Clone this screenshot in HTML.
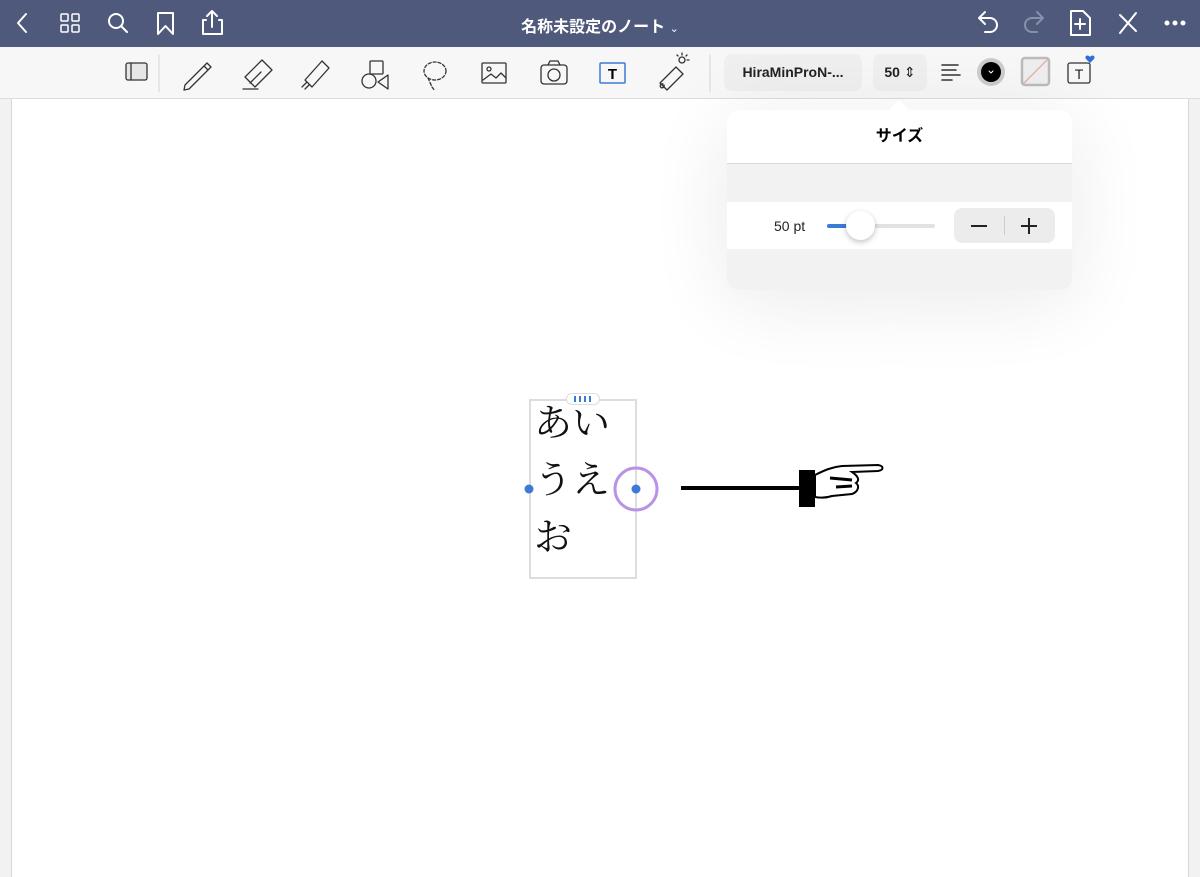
<!DOCTYPE html>
<html><head><meta charset="utf-8"><style>
*{margin:0;padding:0;box-sizing:border-box}
body{width:1200px;height:877px;overflow:hidden;background:#f2f2f2;font-family:"Liberation Sans","Noto Sans CJK JP",sans-serif;position:relative}
.top{position:absolute;left:0;top:0;width:1200px;height:47px;background:#4f597b}
.tb{position:absolute;left:0;top:47px;width:1200px;height:52px;background:#f7f7f7;border-bottom:1px solid #ddd}
.page{position:absolute;left:11px;top:99px;width:1178px;height:778px;background:#fff;border-left:1px solid #d8d8d8;border-right:1px solid #d8d8d8}
svg{position:absolute;overflow:visible}
.title{position:absolute;left:0;width:1200px;top:13px;text-align:center;color:#fff;font-size:16px;font-weight:bold}
.pill{position:absolute;background:#efefef;border-radius:8px;font-size:14px;font-weight:bold;color:#222;text-align:center}
.pop{position:absolute;left:727px;top:110px;width:345px;height:180px;background:#f2f2f2;border-radius:12px;box-shadow:0 10px 80px rgba(0,0,0,0.09);overflow:visible}
</style></head><body>
<div class="top"></div>
<div class="title">名称未設定のノート <span style="font-size:11px;font-weight:normal">&#8964;</span></div>
<svg width="1200" height="47" style="left:0;top:0" fill="none" stroke="#fff" stroke-width="2" stroke-linecap="round" stroke-linejoin="round">
<path d="M26 14 L18 23 L26 32"/>
<rect x="61" y="14" width="7" height="7" rx="1" stroke-width="1.5"/><rect x="72" y="14" width="7" height="7" rx="1" stroke-width="1.5"/><rect x="61" y="25" width="7" height="7" rx="1" stroke-width="1.5"/><rect x="72" y="25" width="7" height="7" rx="1" stroke-width="1.5"/>
<circle cx="116" cy="21" r="7"/><path d="M121 26 L127 32"/>
<path d="M158 13 H173 V34 L165.5 26 L158 34 Z"/>
<path d="M206 20 H203 V34 H222 V20 H219 M212 27 V11 M207 16 L212 11 L217 16"/>
<path d="M979 18 L985 12 M979 18 L985 24 M979 18 H990 A7 7 0 0 1 990 32 H985"/>
<path stroke="#8890a8" d="M1043 18 L1037 12 M1043 18 L1037 24 M1043 18 H1032 A7 7 0 0 0 1032 32 H1037"/>
<path d="M1071 11 H1083 L1090 18 V35 H1071 Z M1080 19 V29 M1075 24 H1085"/>
<path d="M1120 15 L1136 31 M1136 13 L1120 33"/>
<circle cx="1167" cy="23" r="1.5" fill="#fff"/><circle cx="1175" cy="23" r="1.5" fill="#fff"/><circle cx="1183" cy="23" r="1.5" fill="#fff"/>
</svg>
<div class="tb"></div>
<svg width="1200" height="52" style="left:0;top:47px" fill="none" stroke="#333" stroke-width="1.3" stroke-linecap="round" stroke-linejoin="round">
<rect x="126" y="16" width="21" height="17" rx="2" fill="#e6e6e6"/><path d="M131 16 V33"/>
<path d="M159 8 V45" stroke="#ddd"/>
<path d="M185 38 L207 16 L211 20 L189 42 L184 43 Z M204 19 L208 23"/>
<path d="M245 30 L262 13 L272 23 L255 40 Z M250 36 L261 25 M243 42 H258"/>
<path d="M305 33 L322 14 L329 21 L312 40 Z M302 40 L307 35 M309 38 L305 42"/>
<rect x="370" y="14" width="13" height="13" rx="1"/><circle cx="369" cy="34" r="7"/><path d="M388 28 V42 L378 35 Z"/>
<ellipse cx="435" cy="24" rx="11" ry="9" stroke-dasharray="3 2"/><path d="M428 31 L432 40 M432 40 L435 44" stroke-dasharray="3 2"/>
<rect x="482" y="16" width="24" height="20" rx="1"/><circle cx="489" cy="22" r="2"/><path d="M483 33 L491 27 L496 31 L501 26 L506 31"/>
<rect x="541" y="18" width="26" height="19" rx="3"/><circle cx="554" cy="28" r="6"/><path d="M548 18 L550 14 H558 L560 18"/>
<rect x="600" y="16" width="25" height="20" rx="1" stroke="#3b7bd6" stroke-width="1.5"/><text x="612.5" y="32" font-size="15" font-weight="bold" fill="#000" stroke="none" text-anchor="middle" font-family="Liberation Sans">T</text>
<path d="M660 40 L676 24 L683 31 L667 47 Z M663 41 a2 2 0 1 0 1 1" transform="translate(0,-4)"/>
<circle cx="682" cy="13" r="3"/><path d="M682 6 V8 M689 13 H687 M687 8 L686 9 M677 8 L678 9"/>
<path d="M710 8 V45" stroke="#ddd"/>
<path d="M942 18 H958 M942 23 H956 M942 28 H960 M942 33 H952" stroke-width="1.6"/>
<circle cx="991" cy="25" r="14" fill="#ccc" stroke="none"/><circle cx="991" cy="25" r="10" fill="#000" stroke="none"/><path d="M989 24 L991 26 L993 24" stroke="#fff" stroke-width="1"/>
<rect x="1022" y="11" width="27" height="27" rx="3" fill="#eee" stroke="#bbb" stroke-width="2.5"/><path d="M1024 36 L1047 13" stroke="#e0b0a0"/>
<rect x="1068" y="16" width="22" height="20" rx="2"/><text x="1079" y="32" font-size="14" fill="#222" stroke="none" text-anchor="middle" font-family="Liberation Sans">T</text>
<path d="M1090 10 c-2-3-6-1-4 2 l4 4 4-4 c2-3-2-5-4-2z" fill="#2f6fd6" stroke="none"/>
</svg>
<div class="pill" style="left:724px;top:54px;width:138px;height:37px;line-height:37px">HiraMinProN-...</div>
<div class="pill" style="left:873px;top:54px;width:54px;height:37px;line-height:37px">50 <span style="font-weight:normal">&#8661;</span></div>
<div class="page"></div>
<div class="pop">
<div style="position:absolute;left:164px;top:-7px;width:16px;height:16px;background:#fff;transform:rotate(45deg);border-radius:3px"></div>
<div style="position:absolute;left:0;top:0;width:345px;height:54px;background:#fff;border-radius:12px 12px 0 0;border-bottom:1px solid #d8d8d8;text-align:center;line-height:54px;font-weight:bold;font-size:16px">サイズ</div>
<div style="position:absolute;left:0;top:92px;width:345px;height:47px;background:#fff"></div>
<div style="position:absolute;left:47px;top:108px;font-size:14px;color:#222">50 pt</div>
<div style="position:absolute;left:100px;top:114px;width:108px;height:4px;background:#e2e2e2;border-radius:2px"></div>
<div style="position:absolute;left:100px;top:114px;width:24px;height:4px;background:#3b7bd6;border-radius:2px"></div>
<div style="position:absolute;left:119px;top:101px;width:29px;height:29px;background:#fff;border-radius:50%;box-shadow:0 2px 6px rgba(0,0,0,0.25)"></div>
<div style="position:absolute;left:227px;top:98px;width:101px;height:35px;background:#ececec;border-radius:8px"></div>
<div style="position:absolute;left:277px;top:106px;width:1px;height:19px;background:#ccc"></div>
<div style="position:absolute;left:244px;top:115px;width:16px;height:2px;background:#222"></div>
<div style="position:absolute;left:294px;top:115px;width:16px;height:2px;background:#222"></div>
<div style="position:absolute;left:301px;top:108px;width:2px;height:16px;background:#222"></div>
</div>
<div style="position:absolute;left:529px;top:399px;width:108px;height:180px;border:2px solid #ddd"></div>
<div style="position:absolute;left:566px;top:393px;width:34px;height:12px;background:#fff;border:1.5px solid #ddd;border-radius:7px"></div>
<svg width="1200" height="877" style="left:0;top:0">
<g fill="#3b7bd6"><rect x="574" y="396" width="2" height="6"/><rect x="579" y="396" width="2" height="6"/><rect x="584" y="396" width="2" height="6"/><rect x="589" y="396" width="2" height="6"/></g>
<circle cx="636" cy="489" r="21" fill="none" stroke="#b993e8" stroke-width="3"/>
<circle cx="636" cy="489" r="4.5" fill="#3b7bd6"/><circle cx="529" cy="489" r="4.5" fill="#3b7bd6"/>
<path d="M681 488 H800" stroke="#000" stroke-width="4"/>
<rect x="799" y="470" width="16" height="37" fill="#000"/>
<path d="M815 475 C825 470 832 467 842 466 L878 465 C884 466 884 470 878 471 L852 472 C858 476 860 480 856 483 C860 486 858 492 852 494 L832 496 C826 498 820 498 815 497 Z" fill="#fff" stroke="#000" stroke-width="2"/>
<path d="M830 478 L852 480 M836 487 L852 486" stroke="#000" stroke-width="3"/>
</svg>
<div style="position:absolute;left:534px;top:396px;font-family:'Liberation Serif','Noto Serif CJK SC',serif;font-size:38px;line-height:57px;color:#111">あい<br>うえ<br>お</div>
</body></html>
